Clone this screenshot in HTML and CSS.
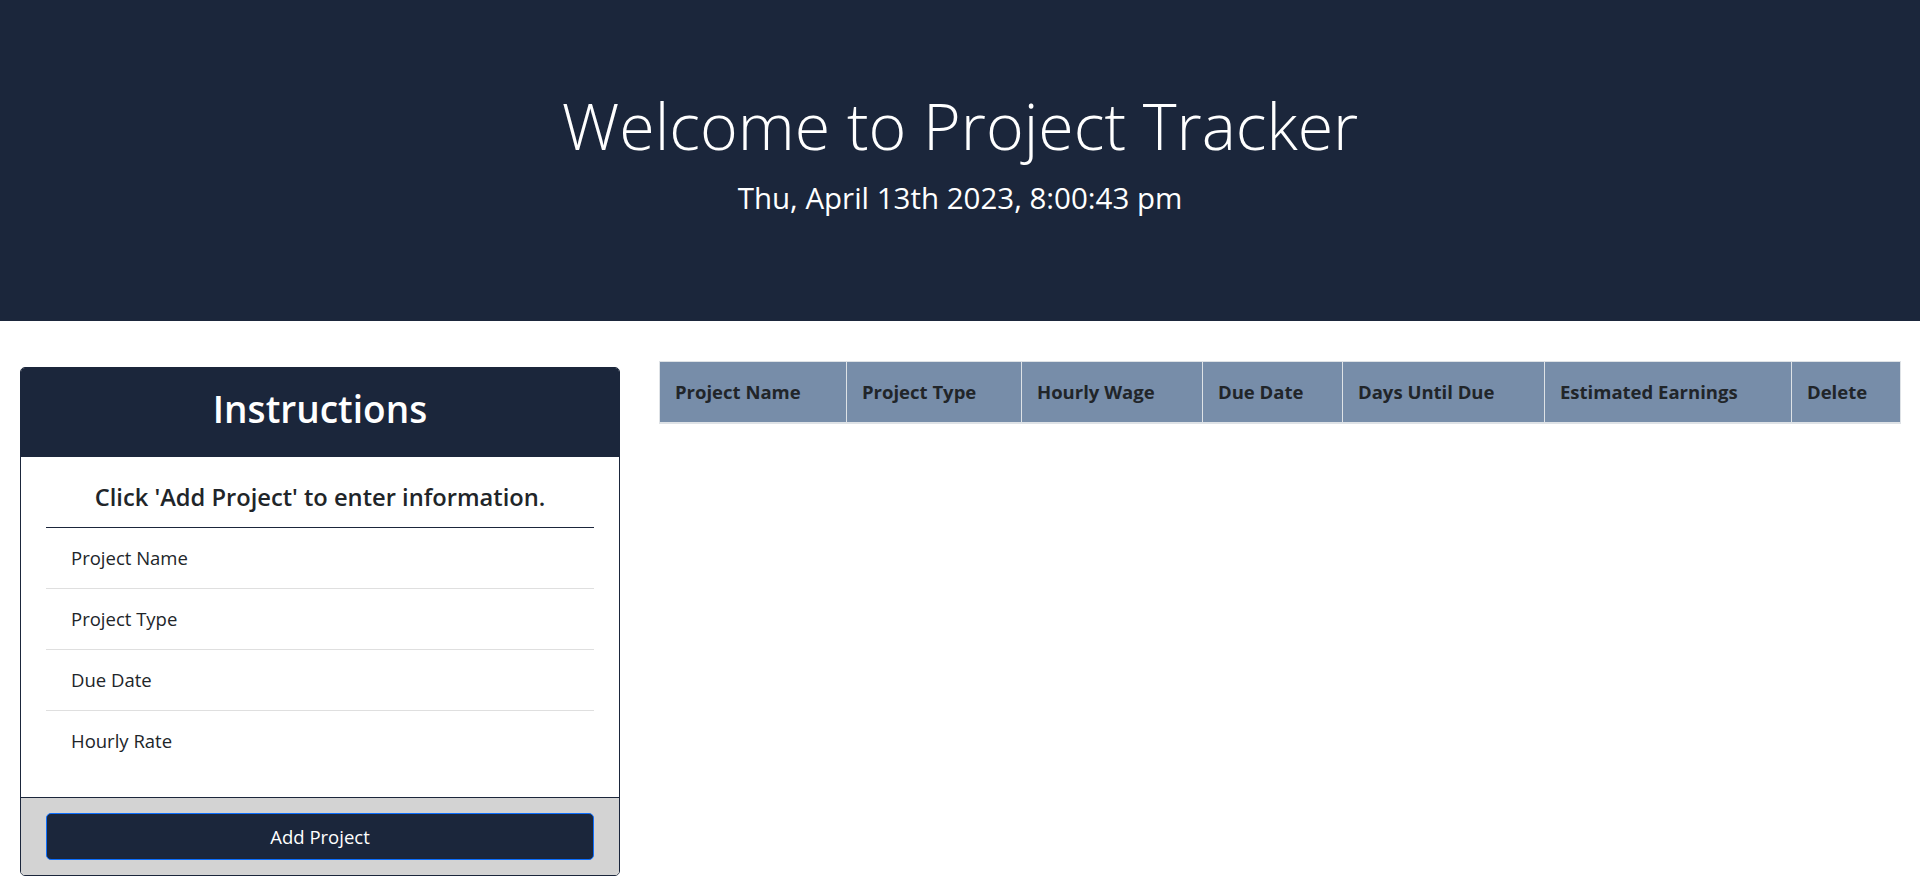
FILE: index.html
```html
<!DOCTYPE html>
<html lang="en">
<head>
<meta charset="utf-8">
<title>Project Tracker</title>
<link rel="stylesheet" href="styles.css">
</head>
<body>
<header class="hero">
  <h1 class="hero-title">Welcome to Project Tracker</h1>
  <p class="hero-date">Thu, April 13th 2023, 8:00:43 pm</p>
</header>
<main class="layout">
  <section class="side">
    <div class="card">
      <div class="card-header">
        <h2 class="card-title">Instructions</h2>
      </div>
      <div class="card-body">
        <h5 class="card-lead">Click 'Add Project' to enter information.</h5>
        <hr class="divider">
        <ul class="steps">
          <li class="step">Project Name</li>
          <li class="step">Project Type</li>
          <li class="step">Due Date</li>
          <li class="step">Hourly Rate</li>
        </ul>
      </div>
      <div class="card-footer">
        <button class="btn-add" type="button">Add Project</button>
      </div>
    </div>
  </section>
  <section class="content">
    <table class="projects">
      <colgroup>
        <col class="c1"><col class="c2"><col class="c3"><col class="c4"><col class="c5"><col class="c6"><col class="c7">
      </colgroup>
      <thead>
        <tr>
          <th>Project Name</th>
          <th>Project Type</th>
          <th>Hourly Wage</th>
          <th>Due Date</th>
          <th>Days Until Due</th>
          <th>Estimated Earnings</th>
          <th>Delete</th>
        </tr>
      </thead>
      <tbody></tbody>
    </table>
  </section>
</main>
</body>
</html>
```

FILE: styles.css
```css
* { box-sizing: border-box; }

html, body {
  margin: 0;
  padding: 0;
}

body {
  font-family: "Open Sans", "Noto Sans", "Liberation Sans", sans-serif;
  font-size: 20px;
  line-height: 1.5;
  color: #212529;
  background: #ffffff;
}

.hero {
  background: #1b263b;
  color: #ffffff;
  text-align: center;
  padding: 83px 32px 81px;
  margin-bottom: 40px;
}

.hero-title {
  margin: 0 0 8px;
  font-size: 64.5px;
  font-weight: 300;
  line-height: 84px;
}

.hero-date {
  margin: 0 0 20px;
  font-size: 29.5px;
  line-height: 45px;
}

.layout {
  display: flex;
  align-items: flex-start;
}

.side {
  width: 640px;
  flex: 0 0 640px;
  padding: 6px 20px 0;
}

.content {
  flex: 1 1 auto;
  padding: 0 20px 0 19px;
}

.card {
  border: 1px solid #1b263b;
  border-radius: 5px;
  overflow: hidden;
  background: #ffffff;
}

.card-header {
  background: #1b263b;
  color: #ffffff;
  height: 89px;
  padding-bottom: 7px;
  display: flex;
  align-items: center;
  justify-content: center;
}

.card-title {
  margin: 0;
  font-size: 37px;
  font-weight: 600;
  line-height: 48px;
}

.card-body {
  padding: 25px 25px 25px;
}

.card-lead {
  margin: 0;
  text-align: center;
  font-size: 23.7px;
  font-weight: 600;
  line-height: 30px;
}

.divider {
  margin: 15px 0 0;
  border: 0;
  border-top: 1px solid #1b263b;
  height: 0;
}

.steps {
  list-style: none;
  margin: 0;
  padding: 0;
}

.step {
  padding: 15px 25px;
  font-size: 18.5px;
  line-height: 30px;
  border-bottom: 1px solid #dfdfdf;
}

.step:last-child {
  border-bottom-color: transparent;
}

.card-footer {
  background: #d3d3d3;
  border-top: 1px solid #1b263b;
  padding: 15px 25px 15px;
}

.btn-add {
  display: block;
  width: 100%;
  height: 47px;
  background: #1b263b;
  color: #ffffff;
  border: 1px solid #0d6efd;
  border-radius: 5px;
  font-family: inherit;
  font-size: 18.5px;
  line-height: 30px;
}

.projects {
  width: 100%;
  table-layout: fixed;
  border-collapse: collapse;
}

.c1 { width: 187px; }
.c2 { width: 175px; }
.c3 { width: 181px; }
.c4 { width: 140px; }
.c5 { width: 202px; }
.c6 { width: 247px; }
.c7 { width: 109px; }

.projects th {
  background: #778da9;
  color: #212529;
  text-align: left;
  font-size: 18.5px;
  font-weight: 700;
  line-height: 30px;
  padding: 15px 15px;
  border: 1px solid #dee2e6;
  border-bottom-width: 2px;
  white-space: nowrap;
}
```
